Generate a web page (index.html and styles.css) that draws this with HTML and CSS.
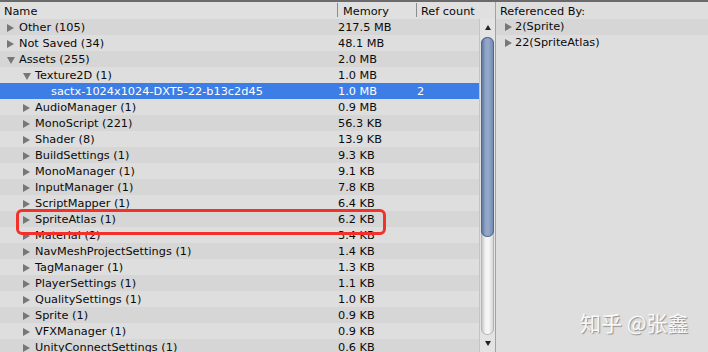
FILE: index.html
```html
<!DOCTYPE html>
<html lang="en">
<head>
  <meta charset="UTF-8" />
  <title>Memory Profiler</title>
  <link rel="stylesheet" href="styles.css">
</head>
<body>
  <div class="window">
    <!-- Object tree with memory column -->
    <div class="tree-pane">
      <div class="header">
        <div class="col-name">Name</div>
        <div class="col-memory">Memory</div>
        <div class="col-ref">Ref count</div>
      </div>
      <div class="body">
        <div class="rows">
          <div class="row lvl0"><span class="name"><i class="arrow right"></i>Other (105)</span><span class="mem">217.5 MB</span><span class="ref"></span></div>
          <div class="row lvl0"><span class="name"><i class="arrow right"></i>Not Saved (34)</span><span class="mem">48.1 MB</span><span class="ref"></span></div>
          <div class="row lvl0"><span class="name"><i class="arrow down"></i>Assets (255)</span><span class="mem">2.0 MB</span><span class="ref"></span></div>
          <div class="row lvl1"><span class="name"><i class="arrow down"></i>Texture2D (1)</span><span class="mem">1.0 MB</span><span class="ref"></span></div>
          <div class="row lvl2 selected"><span class="name"><i class="arrow none"></i>sactx-1024x1024-DXT5-22-b13c2d45</span><span class="mem">1.0 MB</span><span class="ref">2</span></div>
          <div class="row lvl1"><span class="name"><i class="arrow right"></i>AudioManager (1)</span><span class="mem">0.9 MB</span><span class="ref"></span></div>
          <div class="row lvl1"><span class="name"><i class="arrow right"></i>MonoScript (221)</span><span class="mem">56.3 KB</span><span class="ref"></span></div>
          <div class="row lvl1"><span class="name"><i class="arrow right"></i>Shader (8)</span><span class="mem">13.9 KB</span><span class="ref"></span></div>
          <div class="row lvl1"><span class="name"><i class="arrow right"></i>BuildSettings (1)</span><span class="mem">9.3 KB</span><span class="ref"></span></div>
          <div class="row lvl1"><span class="name"><i class="arrow right"></i>MonoManager (1)</span><span class="mem">9.1 KB</span><span class="ref"></span></div>
          <div class="row lvl1"><span class="name"><i class="arrow right"></i>InputManager (1)</span><span class="mem">7.8 KB</span><span class="ref"></span></div>
          <div class="row lvl1"><span class="name"><i class="arrow right"></i>ScriptMapper (1)</span><span class="mem">6.4 KB</span><span class="ref"></span></div>
          <div class="row lvl1"><span class="name"><i class="arrow right"></i>SpriteAtlas (1)</span><span class="mem">6.2 KB</span><span class="ref"></span></div>
          <div class="row lvl1"><span class="name"><i class="arrow right"></i>Material (2)</span><span class="mem">3.4 KB</span><span class="ref"></span></div>
          <div class="row lvl1"><span class="name"><i class="arrow right"></i>NavMeshProjectSettings (1)</span><span class="mem">1.4 KB</span><span class="ref"></span></div>
          <div class="row lvl1"><span class="name"><i class="arrow right"></i>TagManager (1)</span><span class="mem">1.3 KB</span><span class="ref"></span></div>
          <div class="row lvl1"><span class="name"><i class="arrow right"></i>PlayerSettings (1)</span><span class="mem">1.1 KB</span><span class="ref"></span></div>
          <div class="row lvl1"><span class="name"><i class="arrow right"></i>QualitySettings (1)</span><span class="mem">1.0 KB</span><span class="ref"></span></div>
          <div class="row lvl1"><span class="name"><i class="arrow right"></i>Sprite (1)</span><span class="mem">0.9 KB</span><span class="ref"></span></div>
          <div class="row lvl1"><span class="name"><i class="arrow right"></i>VFXManager (1)</span><span class="mem">0.9 KB</span><span class="ref"></span></div>
          <div class="row lvl1"><span class="name"><i class="arrow right"></i>UnityConnectSettings (1)</span><span class="mem">0.6 KB</span><span class="ref"></span></div>
          <!-- red annotation box drawn over the SpriteAtlas row -->
          <div class="highlight"></div>
        </div>
        <div class="scrollbar">
          <div class="scroll-btn"><i class="tri up"></i></div>
          <div class="trough"><div class="thumb"></div></div>
          <div class="scroll-btn"><i class="tri dn"></i></div>
        </div>
      </div>
    </div>
    <!-- Referenced by list -->
    <div class="ref-pane">
      <div class="ref-title">Referenced By:</div>
      <div class="ref-row"><i class="arrow right"></i>2(Sprite)</div>
      <div class="ref-row"><i class="arrow right"></i>22(SpriteAtlas)</div>
    </div>
    <div class="watermark">知乎 @张鑫</div>
  </div>
</body>
</html>
```

FILE: styles.css
```css
:root {
  --bg: #dedede;
  --row-alt: #d6d6d6;
  --header-bg: #e0e0e0;
  --select: #3d7ee6;
  --text: #0a0a0a;
  --arrow: #777777;
  --line: #8c8c8c;
  --font: "DejaVu Sans", Verdana, sans-serif;
}
body {
  margin: 0;
  font-family: var(--font);
  font-size: 11.3px;
  color: var(--text);
  background: var(--bg);
  overflow: hidden;
}
.window {
  position: relative;
  width: 708px;
  height: 352px;
  display: flex;
  border-top: 2px solid #6a6a6a;
  box-sizing: border-box;
  overflow: hidden;
}
/* Tree pane */
.tree-pane {
  width: 495px;
  border-right: 1px solid #a2a2a2;
  display: flex;
  flex-direction: column;
}
.header {
  height: 17px;
  line-height: 20px;
  background: var(--header-bg);
  display: flex;
}
.header .col-name {
  width: 333px;
  padding-left: 4px;
}
.header .col-memory {
  width: 73px;
  padding-left: 5px;
  border-left: 1px solid var(--line);
  margin: 1px 0 2px;
  line-height: 18px;
  overflow: hidden;
}
.header .col-ref {
  flex: 1;
  padding-left: 4px;
  border-left: 1px solid var(--line);
  margin: 1px 0 2px;
  line-height: 18px;
  overflow: hidden;
  white-space: nowrap;
}
.body {
  flex: 1;
  display: flex;
  min-height: 0;
}
.rows {
  position: relative;
  width: 480px;
  overflow: hidden;
}
.row {
  height: 16px;
  line-height: 18px;
  display: grid;
  grid-template-columns: 337px 79px 1fr;
  white-space: nowrap;
}
.row:nth-child(odd) {
  background: var(--row-alt);
}
.row.selected {
  background: var(--select);
  color: #ffffff;
}
.row .name {
  display: flex;
  align-items: center;
  padding-left: 7px;
}
.row.lvl1 .name { padding-left: 23px; }
.row.lvl2 .name { padding-left: 39px; }
.row .mem { padding-left: 1px; }
.row .ref { padding-left: 1px; }
/* tree arrows */
.arrow {
  display: inline-block;
  width: 7px;
  height: 8px;
  margin-right: 5px;
  flex: none;
  box-sizing: border-box;
}
.arrow.right {
  border-left: 7px solid var(--arrow);
  border-top: 4px solid transparent;
  border-bottom: 4px solid transparent;
}
.arrow.down {
  width: 8px;
  margin-right: 4px;
  border-top: 7px solid var(--arrow);
  border-left: 4px solid transparent;
  border-right: 4px solid transparent;
  height: 7px;
}
.highlight {
  position: absolute;
  left: 16px;
  top: 190px;
  width: 370px;
  height: 26px;
  box-sizing: border-box;
  border: 3px solid #f2312b;
  border-radius: 6px;
}
/* Scrollbar */
.scrollbar {
  width: 15px;
  background: #e3e3e3;
  border-left: 1px solid #c4c4c4;
  display: flex;
  flex-direction: column;
  align-items: center;
}
.scroll-btn {
  height: 17px;
  width: 100%;
  display: flex;
  align-items: center;
  justify-content: center;
}
.tri {
  width: 0;
  height: 0;
  border-left: 3px solid transparent;
  border-right: 3px solid transparent;
}
.tri.up { border-bottom: 5px solid #222; }
.tri.dn { border-top: 5px solid #222; }
.trough {
  flex: 1;
  width: 13px;
  margin: 1px 0 0;
  border-radius: 7px;
  background: linear-gradient(to right, #bdbdbd, #f3f3f3 35%, #f6f6f6 60%, #cfcfcf);
  box-shadow: inset 0 0 0 1px #b4b4b4;
}
.thumb {
  height: 200px;
  border-radius: 7px;
  background: linear-gradient(to right, #556d98, #8ea3c6 35%, #96a9c9 55%, #6d84ad);
  box-shadow: inset 0 0 0 1px #50678f;
}
/* Referenced-by pane */
.ref-pane {
  flex: 1;
  background: var(--bg);
}
.ref-title {
  height: 17px;
  line-height: 20px;
  padding-left: 4px;
}
.ref-row {
  height: 16px;
  line-height: 18px;
  display: flex;
  align-items: center;
  padding-left: 9px;
}
.ref-row:nth-child(2) {
  background: var(--row-alt);
}
.ref-row .arrow {
  margin-right: 3px;
}
.watermark {
  position: absolute;
  left: 580px;
  top: 305px;
  font-family: "Noto Sans CJK SC", sans-serif;
  font-size: 21px;
  color: rgba(255, 255, 255, 0.92);
  text-shadow: 1px 1px 1px rgba(0, 0, 0, 0.35);
  white-space: nowrap;
}
```
